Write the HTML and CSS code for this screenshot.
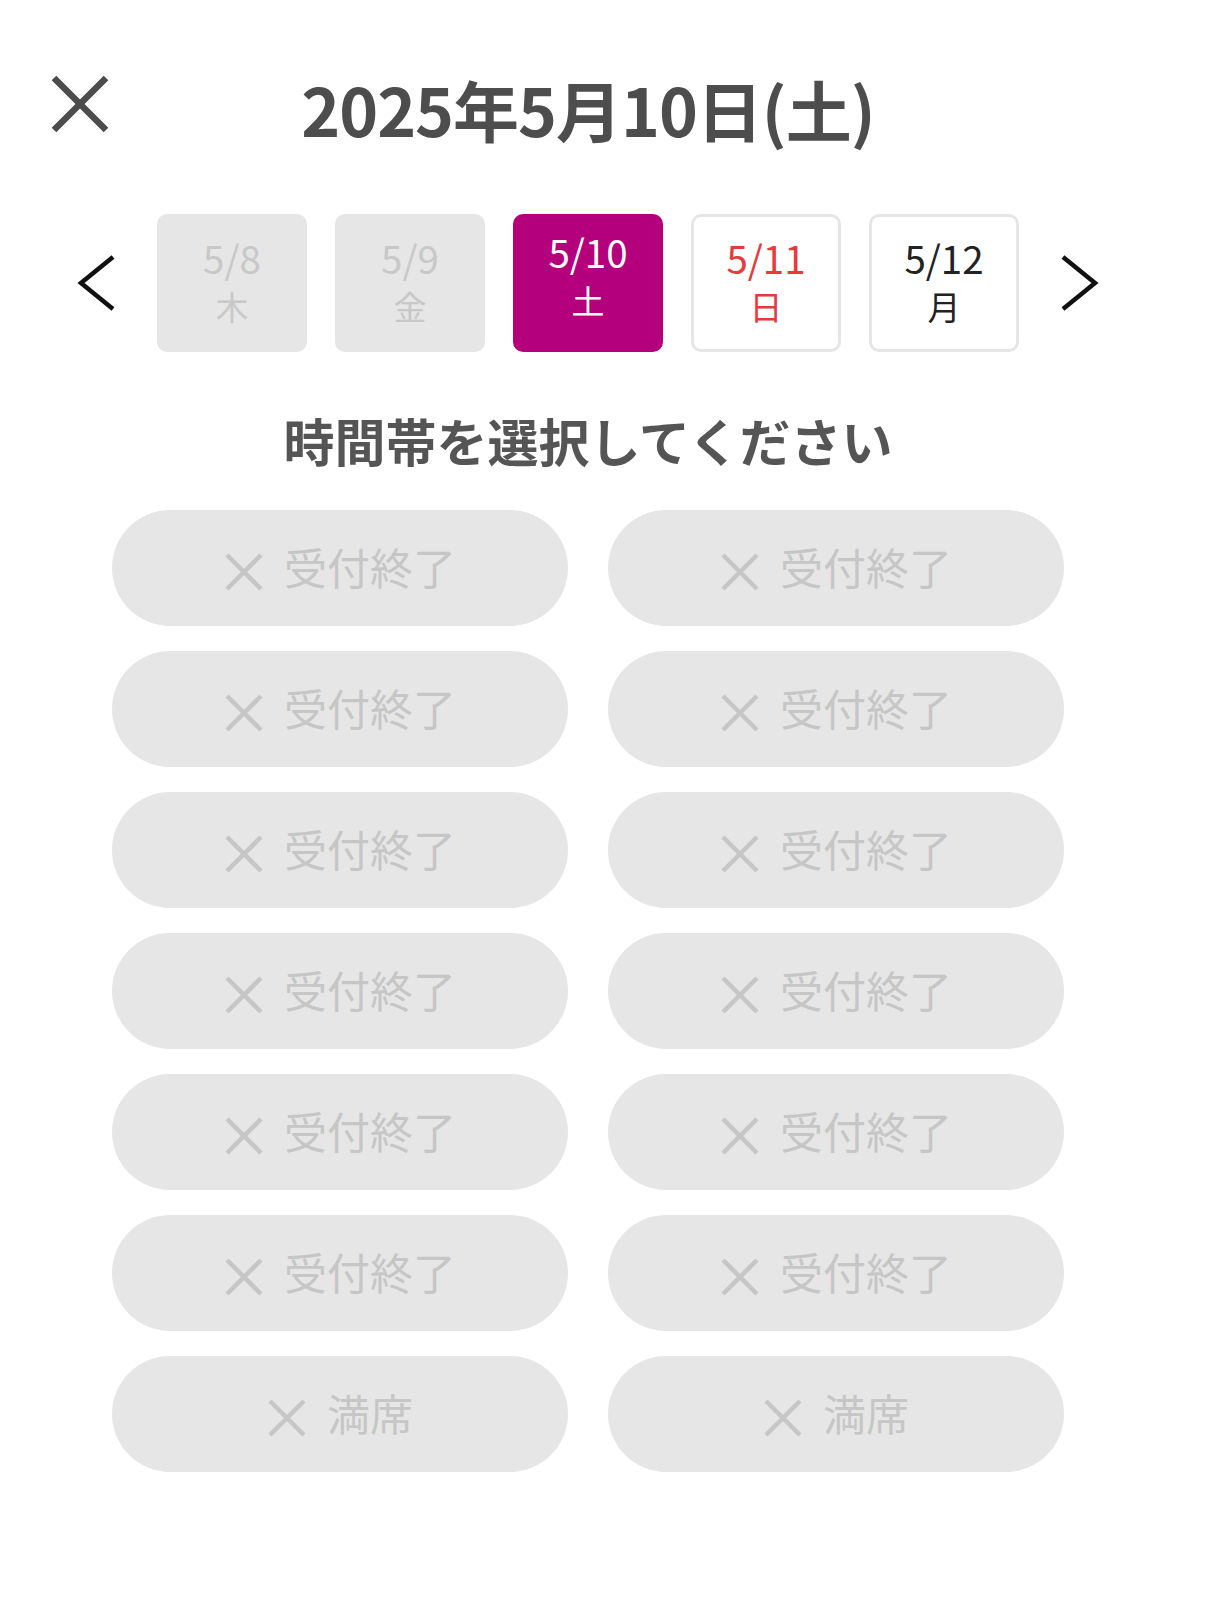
FILE: index.html
```html
<!DOCTYPE html>
<html lang="ja">
<head>
<meta charset="utf-8">
<title>時間帯選択</title>
<link rel="stylesheet" href="styles.css">
</head>
<body>
<div class="page">
  <header class="header">
    <button class="close" aria-label="閉じる">
      <svg viewBox="0 0 60 60" width="60" height="60"><path d="M4 4 L56 56 M56 4 L4 56" stroke="#4b4b4b" stroke-width="6.5" fill="none"/></svg>
    </button>
    <h1 class="title">2025年5月10日(土)</h1>
    <div class="spacer"></div>
  </header>

  <nav class="dates">
    <button class="arrow" aria-label="前へ">
      <svg viewBox="0 0 40 60" width="40" height="60"><path d="M36 4 L4 30 L36 56" stroke="#111" stroke-width="4.5" fill="none"/></svg>
    </button>
    <div class="tabs">
      <div class="tab off"><span class="d">5/8</span><span class="w">木</span></div>
      <div class="tab off"><span class="d">5/9</span><span class="w">金</span></div>
      <div class="tab sel"><span class="d">5/10</span><span class="w">土</span></div>
      <div class="tab sun"><span class="d">5/11</span><span class="w">日</span></div>
      <div class="tab"><span class="d">5/12</span><span class="w">月</span></div>
    </div>
    <button class="arrow" aria-label="次へ">
      <svg viewBox="0 0 40 60" width="40" height="60"><path d="M4 4 L36 30 L4 56" stroke="#111" stroke-width="4.5" fill="none"/></svg>
    </button>
  </nav>

  <h2 class="sub">時間帯を選択してください</h2>

  <div class="slots">
    <div class="slot"><svg class="x" viewBox="0 0 40 40"><path d="M3 3 L37 37 M37 3 L3 37"/></svg><span>受付終了</span></div>
    <div class="slot"><svg class="x" viewBox="0 0 40 40"><path d="M3 3 L37 37 M37 3 L3 37"/></svg><span>受付終了</span></div>
    <div class="slot"><svg class="x" viewBox="0 0 40 40"><path d="M3 3 L37 37 M37 3 L3 37"/></svg><span>受付終了</span></div>
    <div class="slot"><svg class="x" viewBox="0 0 40 40"><path d="M3 3 L37 37 M37 3 L3 37"/></svg><span>受付終了</span></div>
    <div class="slot"><svg class="x" viewBox="0 0 40 40"><path d="M3 3 L37 37 M37 3 L3 37"/></svg><span>受付終了</span></div>
    <div class="slot"><svg class="x" viewBox="0 0 40 40"><path d="M3 3 L37 37 M37 3 L3 37"/></svg><span>受付終了</span></div>
    <div class="slot"><svg class="x" viewBox="0 0 40 40"><path d="M3 3 L37 37 M37 3 L3 37"/></svg><span>受付終了</span></div>
    <div class="slot"><svg class="x" viewBox="0 0 40 40"><path d="M3 3 L37 37 M37 3 L3 37"/></svg><span>受付終了</span></div>
    <div class="slot"><svg class="x" viewBox="0 0 40 40"><path d="M3 3 L37 37 M37 3 L3 37"/></svg><span>受付終了</span></div>
    <div class="slot"><svg class="x" viewBox="0 0 40 40"><path d="M3 3 L37 37 M37 3 L3 37"/></svg><span>受付終了</span></div>
    <div class="slot"><svg class="x" viewBox="0 0 40 40"><path d="M3 3 L37 37 M37 3 L3 37"/></svg><span>受付終了</span></div>
    <div class="slot"><svg class="x" viewBox="0 0 40 40"><path d="M3 3 L37 37 M37 3 L3 37"/></svg><span>受付終了</span></div>
    <div class="slot"><svg class="x" viewBox="0 0 40 40"><path d="M3 3 L37 37 M37 3 L3 37"/></svg><span>満席</span></div>
    <div class="slot"><svg class="x" viewBox="0 0 40 40"><path d="M3 3 L37 37 M37 3 L3 37"/></svg><span>満席</span></div>
  </div>
</div>
</body>
</html>
```
FILE: styles.css
```css
* { box-sizing: border-box; }
html, body { margin: 0; padding: 0; background: #fff; }
body {
  font-family: "Noto Sans CJK JP", "Noto Sans", sans-serif;
  color: #333;
}
.page {
  width: 1176px;
  padding-bottom: 80px;
}
button {
  background: none;
  border: 0;
  padding: 0;
  margin: 0;
  cursor: pointer;
  display: block;
}
.header {
  display: grid;
  grid-template-columns: 200px 1fr 200px;
  align-items: start;
  padding-top: 74px;
}
.close {
  margin-left: 50px;
  width: 60px;
  height: 60px;
}
.close svg { display: block; }
.title {
  margin: 0;
  text-align: center;
  font-size: 66px;
  line-height: 1;
  font-weight: 700;
  color: #4d4d4d;
  letter-spacing: -1px;
  padding-top: 1px;
}
.dates {
  display: flex;
  justify-content: center;
  align-items: center;
  margin-top: 73px;
  gap: 40px;
}
.arrow { width: 40px; height: 60px; }
.arrow svg { display: block; }
.tabs {
  display: flex;
  gap: 28px;
}
.tab {
  width: 150px;
  height: 138px;
  border: 3px solid #e6e6e6;
  border-radius: 10px;
  background: #fff;
  display: flex;
  flex-direction: column;
  align-items: center;
  color: #222;
  padding-top: 17px;
}
.tab .d {
  font-size: 38.5px;
  line-height: 1.2;
}
.tab .w {
  font-size: 33px;
  line-height: 1.3;
  margin-top: 5px;
}
.tab.off {
  background: #e6e6e6;
  color: #c8c8c8;
}
.tab.sel {
  background: #b5007e;
  border-color: #b5007e;
  color: #fff;
  padding-top: 11px;
}
.tab.sun { color: #e53b3b; }
.sub {
  margin: 58px 0 0;
  text-align: center;
  font-size: 51px;
  line-height: 1.2;
  font-weight: 700;
  color: #555;
}
.slots {
  margin: 39px auto 0;
  width: 952px;
  display: grid;
  grid-template-columns: 456px 456px;
  column-gap: 40px;
  row-gap: 25px;
}
.slot {
  height: 116px;
  border-radius: 58px;
  background: #e6e6e6;
  display: flex;
  align-items: center;
  justify-content: center;
  gap: 20px;
  color: #c6c6c6;
  font-size: 43px;
  line-height: 1;
}
.slot .x {
  width: 40px;
  height: 40px;
  margin-top: 8px;
}
.slot .x path {
  stroke: #c6c6c6;
  stroke-width: 4.5;
  fill: none;
}
.slot span { padding-bottom: 4px; }
```
